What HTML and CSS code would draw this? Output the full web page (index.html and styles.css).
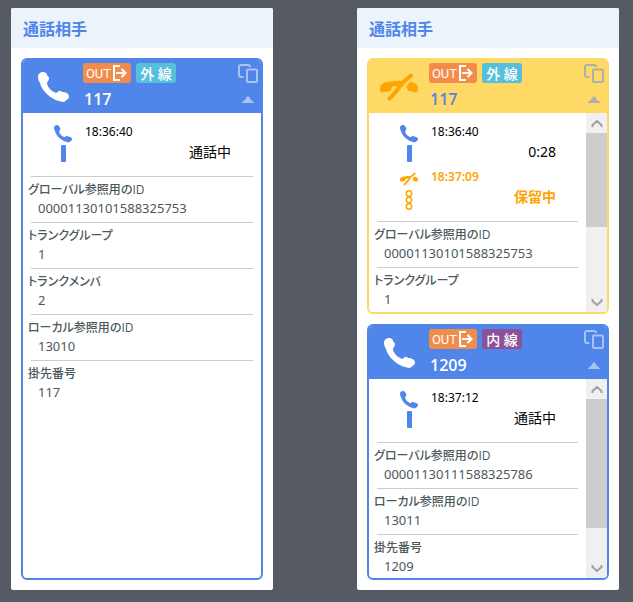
FILE: index.html
```html
<!DOCTYPE html>
<html lang="ja">
<head>
<meta charset="utf-8">
<meta name="viewport" content="width=device-width, initial-scale=1">
<title>通話相手</title>
<link rel="stylesheet" href="styles.css">
</head>
<body>
<svg class="sprite" aria-hidden="true">
  <symbol id="phone" viewBox="0 0 31 31">
    <path d="M0 5C0 1.500 2.500 0 5 0s4 1.500 4.500 4c1.500.500 1.800 2 1.300 3.500-.500 1.700-2 2.500-1.800 4.500 1 3.500 4 7 8 8.500 1.500.500 2 .200 3-.800 1.200-1.500 2.800-1.200 4 .300C28 20 31 22 31 24.500c0 2-1.500 2.700-2.500 3.500-1.500 2-3.500 2.300-5.500 1.500-3-.500-6-1.500-9-3.500C8 22 3.500 17 2 11 .700 9 0 7 0 5z" fill="currentColor"/>
  </symbol>
  <symbol id="hold" viewBox="0 0 38 28">
    <path d="M1 12c2-2.500 6-3.500 10-3.500 4-.900 8-.900 11-.500L17 13.500c-1.500-.500-4-.500-5 .500-.800 1.500-.500 3-1.500 4L2 19.500C-.300 19.500 0 16 0 14.500zM30 8.500c3 .700 7 2 7.700 5 .400 2 .500 6-2 6L29 18c-1.800-.500-1.500-2.500-2.500-4z" fill="currentColor"/>
    <path d="M9.500 25.500C16 20 20 12 24 8.500L31 2.500" fill="none" stroke="currentColor" stroke-width="4" stroke-linecap="round"/>
  </symbol>
  <symbol id="exit" viewBox="0 0 15 16">
    <path d="M7 1H1v14h6M3 8h10M8.500 4l4 4-4 4" fill="none" stroke="currentColor" stroke-width="2"/>
  </symbol>
  <symbol id="copy" viewBox="0 0 20 19">
    <path d="M5.500 13H3a2 2 0 0 1-2-2V3a2 2 0 0 1 2-2h7a2 2 0 0 1 2 2" fill="none" stroke="currentColor" stroke-width="2"/>
    <rect x="9" y="5.500" width="10" height="12.500" rx="1" fill="none" stroke="currentColor" stroke-width="2"/>
  </symbol>
  <symbol id="fold" viewBox="0 0 12 7">
    <path d="M0 7C0 5.500 3 4.500 4.500 1.500Q6-1.200 7.500 1.500C9 4.500 12 5.500 12 7z" fill="currentColor"/>
  </symbol>
  <symbol id="up" viewBox="0 0 12 9">
    <path d="M1.500 8V6L6 2l4.500 4v2" fill="none" stroke="currentColor" stroke-width="2"/>
  </symbol>
  <symbol id="down" viewBox="0 0 12 9">
    <path d="M1.500 1v2L6 7l4.500-4V1" fill="none" stroke="currentColor" stroke-width="2"/>
  </symbol>
  <symbol id="beads" viewBox="0 0 8 20">
    <g fill="none" stroke="currentColor" stroke-width="1.500">
      <circle cx="4" cy="3.500" r="2.700"/><circle cx="4" cy="10" r="2.700"/><circle cx="4" cy="16.500" r="2.700"/>
    </g>
  </symbol>
</svg>

<main class="board">
  <section class="panel">
    <h1 class="panel-title">通話相手</h1>
    <div class="cards">
      <article class="card">
        <header class="card-head">
          <div class="state"><svg class="phone-icon"><use href="#phone"/></svg></div>
          <div class="summary">
            <div class="badges">
              <span class="badge out">OUT<svg class="exit-icon"><use href="#exit"/></svg></span>
              <span class="badge external">外 線</span>
            </div>
            <h2 class="number">117</h2>
          </div>
          <div class="tools">
            <button type="button" aria-label="コピー"><svg class="copy-icon"><use href="#copy"/></svg></button>
            <button type="button" aria-label="折りたたむ"><svg class="fold-icon"><use href="#fold"/></svg></button>
          </div>
        </header>
        <div class="card-body">
          <div class="content">
            <ol class="timeline">
              <li class="event">
                <div class="marker"><svg class="small-phone"><use href="#phone"/></svg><span class="bar"></span></div>
                <div class="event-text"><time>18:36:40</time><span class="status">通話中</span></div>
              </li>
            </ol>
            <dl class="details">
              <div class="detail"><dt>グローバル参照用のID</dt><dd>00001130101588325753</dd></div>
              <div class="detail"><dt>トランクグループ</dt><dd>1</dd></div>
              <div class="detail"><dt>トランクメンバ</dt><dd>2</dd></div>
              <div class="detail"><dt>ローカル参照用のID</dt><dd>13010</dd></div>
              <div class="detail"><dt>掛先番号</dt><dd>117</dd></div>
            </dl>
          </div>
        </div>
      </article>
    </div>
  </section>

  <section class="panel">
    <h1 class="panel-title">通話相手</h1>
    <div class="cards">
      <article class="card held">
        <header class="card-head">
          <div class="state"><svg class="hold-icon"><use href="#hold"/></svg></div>
          <div class="summary">
            <div class="badges">
              <span class="badge out">OUT<svg class="exit-icon"><use href="#exit"/></svg></span>
              <span class="badge external">外 線</span>
            </div>
            <h2 class="number">117</h2>
          </div>
          <div class="tools">
            <button type="button" aria-label="コピー"><svg class="copy-icon"><use href="#copy"/></svg></button>
            <button type="button" aria-label="折りたたむ"><svg class="fold-icon"><use href="#fold"/></svg></button>
          </div>
        </header>
        <div class="card-body">
          <div class="content">
            <ol class="timeline">
              <li class="event">
                <div class="marker"><svg class="small-phone"><use href="#phone"/></svg><span class="bar"></span></div>
                <div class="event-text"><time>18:36:40</time><span class="status">0:28</span></div>
              </li>
              <li class="event on-hold">
                <div class="marker"><svg class="small-phone"><use href="#hold"/></svg><svg class="beads"><use href="#beads"/></svg></div>
                <div class="event-text"><time>18:37:09</time><span class="status">保留中</span></div>
              </li>
            </ol>
            <dl class="details">
              <div class="detail"><dt>グローバル参照用のID</dt><dd>00001130101588325753</dd></div>
              <div class="detail"><dt>トランクグループ</dt><dd>1</dd></div>
            </dl>
          </div>
          <div class="scrollbar">
            <button type="button" aria-label="上へ"><svg class="arrow"><use href="#up"/></svg></button>
            <div class="track"><div class="thumb" style="height:59%"></div></div>
            <button type="button" aria-label="下へ"><svg class="arrow"><use href="#down"/></svg></button>
          </div>
        </div>
      </article>

      <article class="card">
        <header class="card-head">
          <div class="state"><svg class="phone-icon"><use href="#phone"/></svg></div>
          <div class="summary">
            <div class="badges">
              <span class="badge out">OUT<svg class="exit-icon"><use href="#exit"/></svg></span>
              <span class="badge internal">内 線</span>
            </div>
            <h2 class="number">1209</h2>
          </div>
          <div class="tools">
            <button type="button" aria-label="コピー"><svg class="copy-icon"><use href="#copy"/></svg></button>
            <button type="button" aria-label="折りたたむ"><svg class="fold-icon"><use href="#fold"/></svg></button>
          </div>
        </header>
        <div class="card-body">
          <div class="content">
            <ol class="timeline">
              <li class="event">
                <div class="marker"><svg class="small-phone"><use href="#phone"/></svg><span class="bar"></span></div>
                <div class="event-text"><time>18:37:12</time><span class="status">通話中</span></div>
              </li>
            </ol>
            <dl class="details">
              <div class="detail"><dt>グローバル参照用のID</dt><dd>00001130111588325786</dd></div>
              <div class="detail"><dt>ローカル参照用のID</dt><dd>13011</dd></div>
              <div class="detail"><dt>掛先番号</dt><dd>1209</dd></div>
            </dl>
          </div>
          <div class="scrollbar">
            <button type="button" aria-label="上へ"><svg class="arrow"><use href="#up"/></svg></button>
            <div class="track"><div class="thumb" style="height:81%"></div></div>
            <button type="button" aria-label="下へ"><svg class="arrow"><use href="#down"/></svg></button>
          </div>
        </div>
      </article>
    </div>
  </section>
</main>
</body>
</html>
```
FILE: styles.css
```css
* { box-sizing: border-box; }

body {
  margin: 0;
  background: #565a63;
  color: #4c585c;
  font-family: "Noto Sans", "Noto Sans CJK JP", sans-serif;
  font-size: 13px;
}

h1, h2, ol, dl, dd { margin: 0; padding: 0; }
ol { list-style: none; }
svg { display: block; }

button {
  display: flex;
  align-items: center;
  justify-content: center;
  padding: 0;
  border: 0;
  background: none;
  color: inherit;
}

.sprite { position: absolute; width: 0; height: 0; }

.board {
  display: grid;
  grid-template-columns: 1fr 1fr;
  gap: 84px;
  min-height: 100vh;
  padding: 8px 14px 12px 11px;
}

.panel {
  display: flex;
  flex-direction: column;
  overflow: hidden;
  border-radius: 2px;
  background: #fff;
}

.panel-title {
  padding: 0 12px;
  background: #ebf3fb;
  color: #5085ea;
  font-family: "Noto Sans CJK JP", sans-serif;
  font-size: 16px;
  font-weight: 700;
  line-height: 40px;
}

.cards {
  display: flex;
  flex: 1;
  flex-direction: column;
  gap: 10px;
  padding: 10px;
}

.card {
  --accent: #5085ea;
  display: flex;
  flex: 1;
  flex-direction: column;
  overflow: hidden;
  border: 2px solid var(--accent);
  border-radius: 6px;
  background: #fff;
}

.card.held { --accent: #ffd966; }

.card-head {
  display: flex;
  padding: 3px 3px 2px 0;
  background: var(--accent);
  color: #fff;
}

.state {
  display: flex;
  flex: 0 0 60px;
  align-items: center;
  justify-content: center;
}

.held .state { color: #ffa500; }
.phone-icon { width: 31px; height: 31px; }
.hold-icon { width: 38px; height: 28px; }
.summary { flex: 1; }
.badges { display: flex; gap: 5px; }

.badge {
  display: flex;
  align-items: center;
  justify-content: center;
  width: 40px;
  height: 20px;
  border-radius: 3px;
  color: #fff;
  font-size: 14px;
  font-weight: 500;
  white-space: nowrap;
}

.badge.out {
  gap: 2px;
  width: 48px;
  background: #f28c4b;
  font-family: Roboto, sans-serif;
  font-size: 13px;
  font-weight: 400;
}

.badge.external { background: #56bfdc; }
.badge.internal { background: #8d509b; }
.exit-icon { width: 15px; height: 16px; }

.number {
  margin-top: 4px;
  padding-left: 1px;
  font-family: "Open Sans", sans-serif;
  font-size: 16px;
  font-weight: 600;
  line-height: 24px;
}

.held .number { color: #5085ea; }

.tools {
  display: flex;
  flex-direction: column;
  align-items: center;
  gap: 13px;
  padding-top: 1px;
  color: #a8c2f4;
}

.held .tools { color: #a9b1ac; }
.copy-icon { width: 20px; height: 19px; }
.fold-icon { width: 12px; height: 7px; }

.card-body { display: flex; flex: 1; }
.content { flex: 1; min-width: 0; }
.timeline { padding: 9px 30px 9px 31px; color: #000; }
.event { display: flex; height: 45px; }

.marker {
  display: flex;
  flex: 0 0 18px;
  flex-direction: column;
  align-items: center;
  gap: 2px;
  padding-top: 3px;
  color: #5085ea;
}

.small-phone { width: 18px; height: 18px; }
.bar { width: 5px; height: 17px; border-radius: 1px; background: currentColor; }
.beads { width: 8px; height: 20px; }

.event-text {
  display: flex;
  flex: 1;
  flex-direction: column;
  padding-left: 13px;
}

.event time { font-size: 12px; line-height: 20px; }
.status { align-self: flex-end; font-size: 14px; line-height: 20px; }
.on-hold, .on-hold .marker { color: #ffa500; }
.on-hold time, .on-hold .status { font-weight: 600; }

.detail { padding: 0 5px 5px; line-height: 18px; }
.detail:last-child { padding-bottom: 2px; }

.detail::before {
  content: "";
  display: block;
  height: 1px;
  margin: 0 3px 4px;
  background: #ccc;
}

.detail dt {
  font-family: "Open Sans", "Noto Sans CJK JP", sans-serif;
  font-size: 12px;
  font-weight: 500;
  font-feature-settings: "palt";
}

.detail dd { padding-left: 10px; }

.scrollbar {
  display: flex;
  flex: 0 0 21px;
  flex-direction: column;
  background: #f0f0f0;
  color: #a0a0a0;
}

.scrollbar button { height: 20px; }
.arrow { width: 12px; height: 9px; }
.track { flex: 1; }
.thumb { background: #cdcdcd; }
```
